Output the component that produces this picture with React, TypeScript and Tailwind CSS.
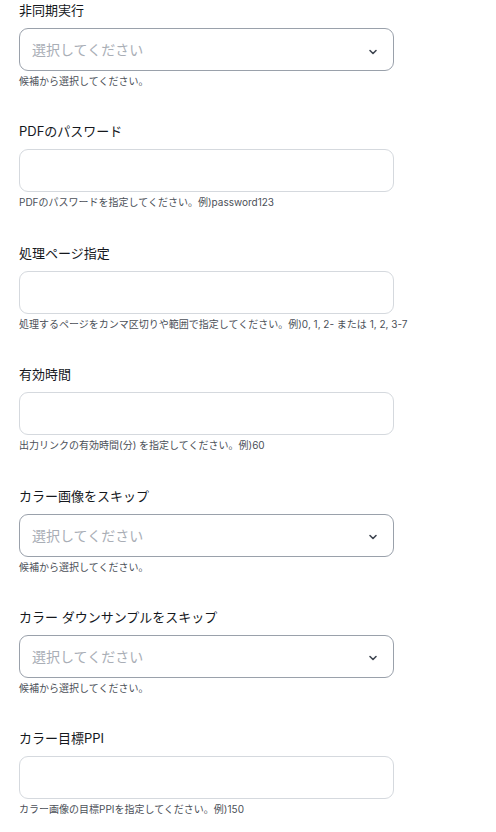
const fields = [
  { label: "非同期実行", type: "select", help: "候補から選択してください。" },
  { label: "PDFのパスワード", type: "input", help: "PDFのパスワードを指定してください。例)password123" },
  { label: "処理ページ指定", type: "input", help: "処理するページをカンマ区切りや範囲で指定してください。例)0, 1, 2- または 1, 2, 3-7" },
  { label: "有効時間", type: "input", help: "出力リンクの有効時間(分) を指定してください。例)60" },
  { label: "カラー画像をスキップ", type: "select", help: "候補から選択してください。" },
  { label: "カラー ダウンサンプルをスキップ", type: "select", help: "候補から選択してください。" },
  { label: "カラー目標PPI", type: "input", help: "カラー画像の目標PPIを指定してください。例)150" },
];

const Chevron = () => (
  <svg width="12" height="12" viewBox="0 0 24 24" fill="none" stroke="#3f4651" strokeWidth="3.2" strokeLinecap="round" strokeLinejoin="round">
    <path d="M6 9l6 6 6-6" />
  </svg>
);

export default function App() {
  return (
    <div className="min-h-screen bg-white px-[19px] font-['Inter','Noto_Sans_CJK_JP',sans-serif]">
      <div className="flex w-[375px] flex-col gap-[33.4px]">
        {fields.map((f) => (
          <div key={f.label} className="flex flex-col">
            <label className="text-[13px] font-normal leading-[20px] text-[#15181d]">{f.label}</label>
            {f.type === "select" ? (
              <div className="mt-[8px] flex h-[43px] items-center justify-between rounded-[9px] border border-[#9aa1ab] px-[12px]">
                <span className="text-[14px] text-[#a9aeb6]">選択してください</span>
                <span className="mr-[2px] mt-[4px]">
                  <Chevron />
                </span>
              </div>
            ) : (
              <input className="mt-[8px] h-[43px] rounded-[9px] border border-[#d5d9de] px-[12px] text-[14px] outline-none" />
            )}
            <p className="mt-[3px] whitespace-nowrap text-[10px] leading-[14px] text-[#4b5058]">{f.help}</p>
          </div>
        ))}
      </div>
    </div>
  );
}
